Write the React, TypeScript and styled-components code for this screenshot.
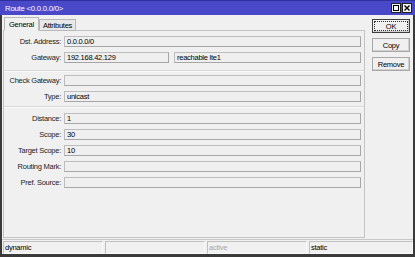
import React from "react";
import styled, { createGlobalStyle } from "styled-components";

const Global = createGlobalStyle`
  html, body { margin: 0; padding: 0; background: #f0f0f0; }
  * { box-sizing: border-box; }
  body {
    font-family: "Liberation Sans", Arial, sans-serif;
    font-size: 7.5px;
    letter-spacing: -0.25px;
    color: #000;
  }
`;

const Window = styled.div`
  width: 415px;
  height: 257px;
  display: flex;
  flex-direction: column;
  background: #f0f0f0;
  overflow: hidden;
`;

const TitleBar = styled.div`
  height: 15px;
  flex: none;
  background: #4848c8;
  color: #fff;
  display: flex;
  align-items: center;
  padding: 0 3px 0 5px;
  font-size: 7.8px;
  border-top: 1px solid #30309a;
`;

const Title = styled.div`
  flex: 1;
`;

const TitleBtn = styled.div`
  width: 10px;
  height: 10px;
  margin-left: 1px;
  background: #f4f4f4;
  border: 1px solid #202020;
  display: flex;
  align-items: center;
  justify-content: center;
  color: #000;
`;

const Frame = styled.div`
  flex: 1;
  display: flex;
  flex-direction: column;
  border-left: 2px solid #3a3a3a;
  border-right: 2px solid #3a3a3a;
  border-bottom: 3px solid #3a3a3a;
`;

const Main = styled.div`
  flex: 1;
  display: flex;
`;

const LeftPane = styled.div`
  width: 363px;
  display: flex;
  flex-direction: column;
  padding-left: 1px;
`;

const TabRow = styled.div`
  height: 15px;
  display: flex;
  align-items: flex-end;
  padding-left: 1px;
  position: relative;
  z-index: 1;
`;

const Tab = styled.div<{ $active?: boolean }>`
  height: ${(p) => (p.$active ? 14 : 12)}px;
  padding: 0 ${(p) => (p.$active ? 4 : 3)}px;
  display: flex;
  align-items: center;
  background: ${(p) => (p.$active ? "#f0f0f0" : "#e8e8e8")};
  border: 1px solid #b8b8b8;
  border-bottom: ${(p) => (p.$active ? "1px solid #f0f0f0" : "1px solid #b8b8b8")};
  margin-bottom: -1px;
`;

const Panel = styled.div`
  flex: 1;
  border: 1px solid #c4c4c4;
  margin-bottom: 1px;
  display: flex;
  flex-direction: column;
  padding-top: 5px;
`;

const Row = styled.div`
  display: flex;
  align-items: center;
  height: 11px;
  margin-bottom: 5px;
`;

const Label = styled.div`
  width: 57px;
  text-align: right;
  margin-right: 3px;
  color: #222;
  white-space: nowrap;
`;

const Field = styled.div<{ $w?: number }>`
  ${(p) => (p.$w ? `width: ${p.$w}px;` : "flex: 1;")}
  height: 11px;
  margin-right: ${(p) => (p.$w ? 5 : 3)}px;
  border: 1px solid #bdbdbd;
  border-right-color: #a6a6a6;
  border-bottom-color: #a6a6a6;
  background: #efefef;
  padding-left: 2px;
  display: flex;
  align-items: center;
  line-height: 9px;
  white-space: nowrap;
  overflow: hidden;
`;

const Separator = styled.div<{ $top: number; $bottom: number }>`
  height: 2px;
  border-top: 1px solid #d8d8d8;
  border-bottom: 1px solid #fbfbfb;
  margin-top: ${(p) => p.$top}px;
  margin-bottom: ${(p) => p.$bottom}px;
`;

const Buttons = styled.div`
  flex: 1;
  display: flex;
  flex-direction: column;
  gap: 5px;
  padding: 4px 0 0 7px;
`;

const Button = styled.div<{ $focus?: boolean }>`
  width: 38px;
  height: 14px;
  border: 1px solid ${(p) => (p.$focus ? "#404040" : "#a8a8a8")};
  background: #f0f0f0;
  display: flex;
  align-items: center;
  justify-content: center;
  outline: ${(p) => (p.$focus ? "1px dotted #303030" : "none")};
  outline-offset: -3px;
  box-shadow: inset -1px -1px 0 #d0d0d0;
`;

const StatusBar = styled.div`
  height: 15px;
  flex: none;
  display: flex;
  gap: 2px;
  padding: 1px 0 1px 1px;
  border-top: 1px solid #c8c8c8;
`;

const Cell = styled.div<{ $dim?: boolean; $grow?: boolean }>`
  ${(p) => (p.$grow ? "flex: 1;" : "width: 100px;")}
  height: 13px;
  border: 1px solid #c0c0c0;
  border-right-color: #fafafa;
  border-bottom-color: #fafafa;
  padding-left: 1px;
  display: flex;
  align-items: center;
  color: ${(p) => (p.$dim ? "#a8a8a8" : "#000")};
`;

export default function App() {
  return (
    <>
      <Global />
      <Window>
        <TitleBar>
          <Title>Route &lt;0.0.0.0/0&gt;</Title>
          <TitleBtn>
            <svg width="6" height="6" viewBox="0 0 6 6">
              <rect x="0.5" y="0.5" width="5" height="5" fill="none" stroke="#000" strokeWidth="1" />
            </svg>
          </TitleBtn>
          <TitleBtn>
            <svg width="6" height="6" viewBox="0 0 6 6">
              <path d="M0.5 0.5 L5.5 5.5 M5.5 0.5 L0.5 5.5" stroke="#000" strokeWidth="1.4" />
            </svg>
          </TitleBtn>
        </TitleBar>
        <Frame>
          <Main>
            <LeftPane>
              <TabRow>
                <Tab $active>General</Tab>
                <Tab>Attributes</Tab>
              </TabRow>
              <Panel>
                <Row>
                  <Label>Dst. Address:</Label>
                  <Field>0.0.0.0/0</Field>
                </Row>
                <Row>
                  <Label>Gateway:</Label>
                  <Field $w={105}>192.168.42.129</Field>
                  <Field>reachable lte1</Field>
                </Row>
                <Separator $top={2} $bottom={3} />
                <Row>
                  <Label>Check Gateway:</Label>
                  <Field />
                </Row>
                <Row>
                  <Label>Type:</Label>
                  <Field>unicast</Field>
                </Row>
                <Separator $top={-1} $bottom={5} />
                <Row>
                  <Label>Distance:</Label>
                  <Field>1</Field>
                </Row>
                <Row>
                  <Label>Scope:</Label>
                  <Field>30</Field>
                </Row>
                <Row>
                  <Label>Target Scope:</Label>
                  <Field>10</Field>
                </Row>
                <Row>
                  <Label>Routing Mark:</Label>
                  <Field />
                </Row>
                <Row>
                  <Label>Pref. Source:</Label>
                  <Field />
                </Row>
              </Panel>
            </LeftPane>
            <Buttons>
              <Button $focus>OK</Button>
              <Button>Copy</Button>
              <Button>Remove</Button>
            </Buttons>
          </Main>
          <StatusBar>
            <Cell>dynamic</Cell>
            <Cell />
            <Cell $dim>active</Cell>
            <Cell $grow>static</Cell>
          </StatusBar>
        </Frame>
      </Window>
    </>
  );
}
